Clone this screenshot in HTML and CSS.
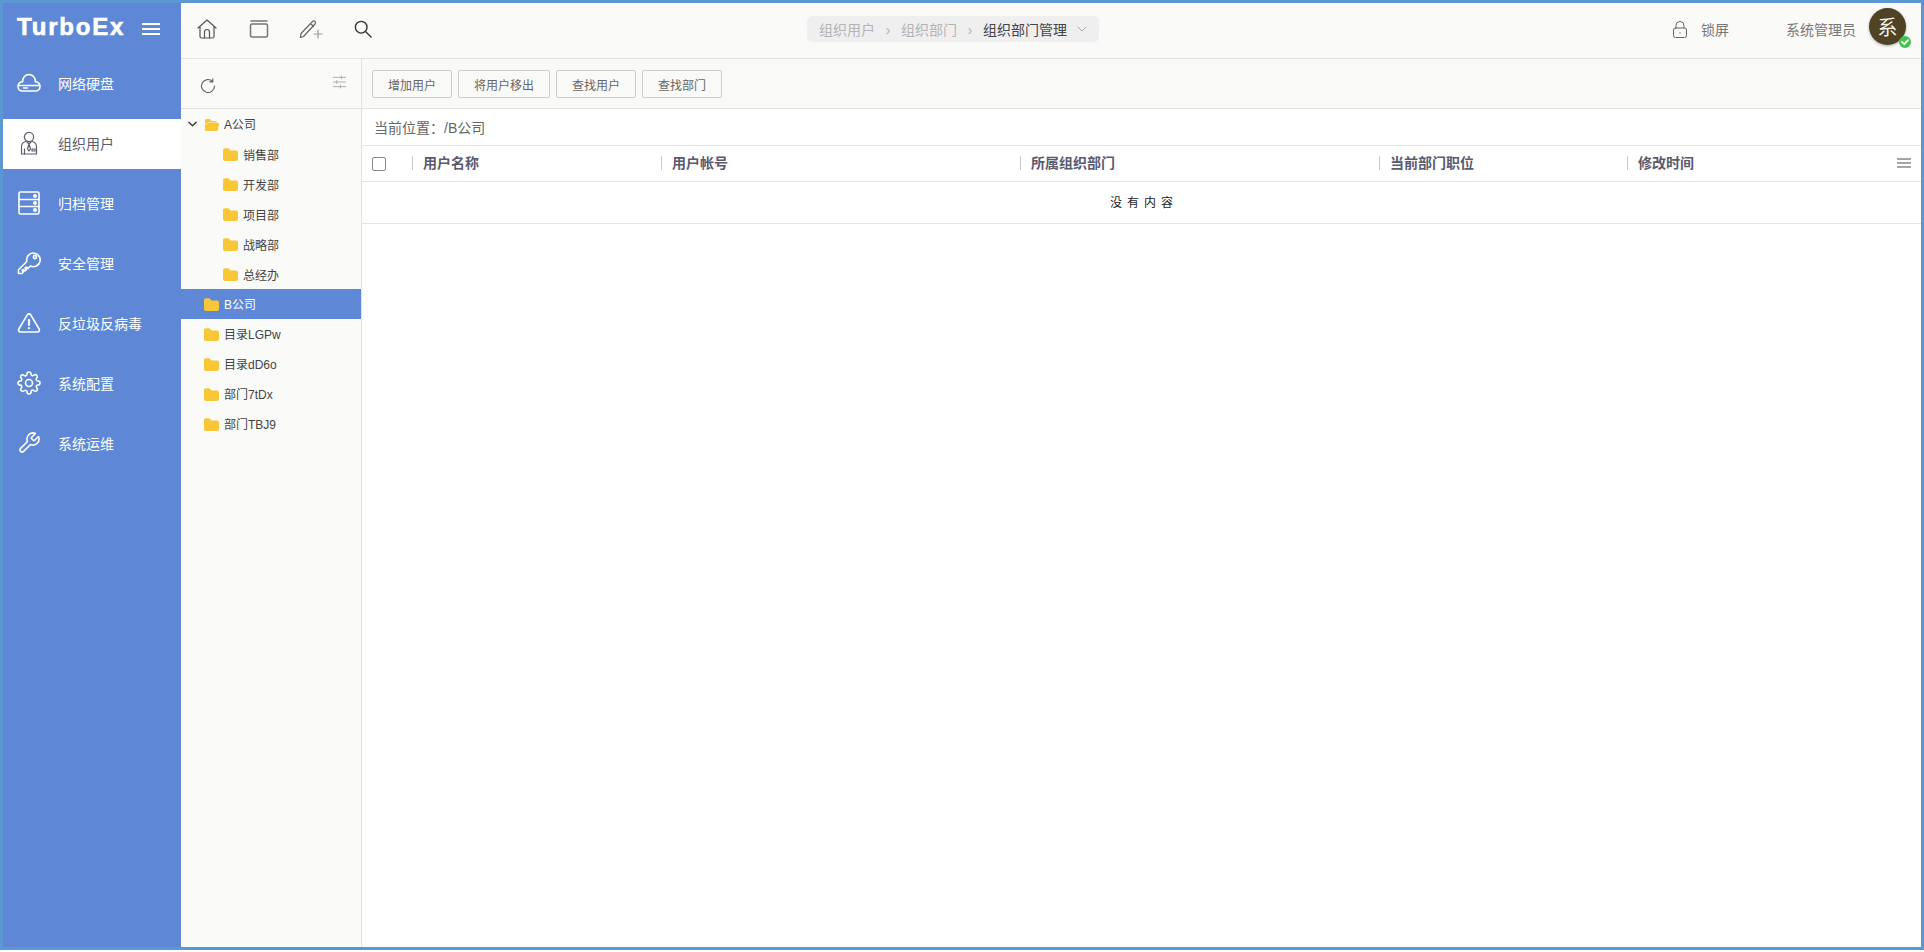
FILE: index.html
```html
<!DOCTYPE html>
<html lang="zh-CN">
<head>
  <meta charset="UTF-8">
  <meta name="viewport" content="width=device-width, initial-scale=1.0">
  <title>TurboEx</title>
  <link rel="stylesheet" href="styles.css">
</head>
<body>
  <div class="app">
    <aside class="sidebar">
      <div class="logo">
        <span class="logo-text">TurboEx</span>
        <svg class="burger" viewBox="0 0 18 12"><path d="M0 1h18M0 6h18M0 11h18"/></svg>
      </div>
      <nav class="nav">
        <a class="nav-item">
          <svg class="nav-icon" viewBox="0 0 24 24"><path d="M5.500 11C5.500 6.500 8.500 3.500 12 3.500s6.500 3 6.500 7.500"/><path d="M5.500 10.500C3 11 1 13 1 15.500 1 18 3 20 5.500 20h13c2.500 0 4.500-2 4.500-4.500 0-2.500-2-4.500-4.500-5"/><path d="M1.500 14.500h21M6.500 17h4"/></svg>
          网络硬盘
        </a>
        <a class="nav-item active">
          <svg class="nav-icon" viewBox="0 0 24 24"><circle cx="12" cy="6" r="4.600"/><path d="M8.500 10.500C5.500 11.500 4.500 13 4.500 16v7h15v-7c0-3-1-4.500-4-5.500"/><path d="M10 11l2 2 2-2M12 13l-1.500 5 1.500 2 1.500-2zM7.500 23v-5M15 18h3v2h-3z"/></svg>
          组织用户
        </a>
        <a class="nav-item">
          <svg class="nav-icon" viewBox="0 0 24 24"><rect x="2" y="1" width="20" height="22" rx="1.500"/><path d="M2 8.500h20M2 15.500h20"/><circle cx="18" cy="5" r="1.200"/><circle cx="18" cy="12" r="1.200"/><circle cx="18" cy="19" r="1.200"/></svg>
          归档管理
        </a>
        <a class="nav-item">
          <svg class="nav-icon" viewBox="0 0 24 24"><path d="M9.800 10.500L1.500 18.800V22a.5.5 0 0 0 .5.5H5L6.500 21 5 19.500l1.500-1L8 20l1.500-1.500L8 17l1.500-1L11 17.500l2.500-2.500A6.800 6.800 0 1 0 9.800 10.500z"/><circle cx="18" cy="6" r="1.600"/></svg>
          安全管理
        </a>
        <a class="nav-item">
          <svg class="nav-icon" viewBox="0 0 24 24"><path d="M10.290 3.860L1.820 18a2 2 0 0 0 1.710 3h16.940a2 2 0 0 0 1.710-3L13.710 3.860a2 2 0 0 0-3.420 0z"/><path class="mark" d="M12 9v5M12 17v.2"/></svg>
          反垃圾反病毒
        </a>
        <a class="nav-item">
          <svg class="nav-icon" viewBox="0 0 24 24"><circle cx="12" cy="12" r="3.500"/><path d="M19.400 15a1.650 1.650 0 0 0 .33 1.820l.06.06a2 2 0 0 1 0 2.830 2 2 0 0 1-2.830 0l-.06-.06a1.650 1.650 0 0 0-1.820-.33 1.650 1.650 0 0 0-1 1.510V21a2 2 0 0 1-2 2 2 2 0 0 1-2-2v-.09A1.650 1.650 0 0 0 9 19.400a1.650 1.650 0 0 0-1.820.33l-.06.06a2 2 0 0 1-2.830 0 2 2 0 0 1 0-2.830l.06-.06a1.650 1.650 0 0 0 .33-1.820 1.650 1.650 0 0 0-1.510-1H3a2 2 0 0 1-2-2 2 2 0 0 1 2-2h.09A1.650 1.650 0 0 0 4.600 9a1.650 1.650 0 0 0-.33-1.820l-.06-.06a2 2 0 0 1 0-2.830 2 2 0 0 1 2.830 0l.06.06a1.650 1.650 0 0 0 1.820.33H9a1.650 1.650 0 0 0 1-1.510V3a2 2 0 0 1 2-2 2 2 0 0 1 2 2v.09a1.650 1.650 0 0 0 1 1.510 1.650 1.650 0 0 0 1.820-.33l.06-.06a2 2 0 0 1 2.830 0 2 2 0 0 1 0 2.830l-.06.06a1.650 1.650 0 0 0-.33 1.820V9a1.650 1.650 0 0 0 1.510 1H21a2 2 0 0 1 2 2 2 2 0 0 1-2 2h-.09a1.650 1.650 0 0 0-1.510 1z"/></svg>
          系统配置
        </a>
        <a class="nav-item">
          <svg class="nav-icon" viewBox="0 0 24 24"><path d="M14.700 6.300a1 1 0 0 0 0 1.400l1.600 1.600a1 1 0 0 0 1.400 0l3.770-3.770a6 6 0 0 1-7.940 7.940l-6.910 6.910a2.120 2.120 0 0 1-3-3l6.910-6.910a6 6 0 0 1 7.940-7.940l-3.760 3.760z"/></svg>
          系统运维
        </a>
      </nav>
    </aside>

    <div class="content">
      <header class="header">
        <div class="tools">
          <svg class="tool tool-home" viewBox="0 0 20 20"><path d="M1 9l9-8 9 8M3 7.500V17.500a1.500 1.500 0 0 0 1.500 1.500h11a1.500 1.500 0 0 0 1.500-1.500V7.500"/><path d="M7.500 19v-6a2.500 2.500 0 0 1 5 0v6"/></svg>
          <svg class="tool tool-box" viewBox="0 0 20 20"><path d="M2 2h16"/><rect x="1.500" y="5" width="17" height="13" rx="1.500"/></svg>
          <svg class="tool tool-pen" viewBox="0 0 24 20"><path d="M2 14.500L13.500 2.500a1.800 1.800 0 0 1 2.500 0 1.800 1.800 0 0 1 0 2.500L4.500 17.500 1.500 18.500zM11.500 4.500l3 3"/><path class="soft" d="M19 11v8M15 15h8"/></svg>
          <svg class="tool tool-search" viewBox="0 0 20 20"><circle cx="8" cy="8" r="6.500"/><path d="M13 13l6 6"/></svg>
        </div>
        <div class="crumbs">
          <span>组织用户</span><i class="crumb-sep">›</i>
          <span>组织部门</span><i class="crumb-sep">›</i>
          <span class="current">组织部门管理</span>
          <svg class="crumb-arrow" viewBox="0 0 10 6"><path d="M1 1l4 4 4-4"/></svg>
        </div>
        <div class="user">
          <svg class="lock" viewBox="0 0 14 17"><path d="M3 7V4.500a4 4 0 0 1 8 0V7"/><rect x=".5" y="7" width="13" height="9.500" rx="2"/><path d="M7 11.500v.5"/></svg>
          <span class="lock-text">锁屏</span>
          <span class="user-name">系统管理员</span>
          <div class="avatar">系
            <span class="badge"><svg viewBox="0 0 12 12"><path d="M3 6l2.200 2.200L9 4.200"/></svg></span>
          </div>
        </div>
      </header>

      <div class="workspace">
        <section class="tree-panel">
          <div class="tree-tools">
            <svg class="refresh" viewBox="0 0 16 16"><path d="M14.500 8a6.500 6.500 0 1 1-2-4.700M12.800 .8v3h-3"/></svg>
            <svg class="sliders" viewBox="0 0 14 14"><path d="M0 2h14M0 7h14M0 12h14"/><path class="knob" d="M9 .5v3M4 5.500v3M8 10.500v3"/></svg>
          </div>
          <ul class="tree">
            <li class="tree-row">
              <svg class="caret" viewBox="0 0 10 6"><path d="M1 1l4 4 4-4"/></svg>
              <svg class="folder" viewBox="0 0 15 13"><path d="M1 2.500C1 1.700 1.700 1 2.500 1H6l1.500 2h4c.8 0 1.500.7 1.500 1.500H4L1 6z"/><path d="M3.500 5H14c.7 0 1 .5 1 1l-1 5.500c-.1.8-.7 1.500-1.500 1.500h-10C1.500 13 1 12.300 1 11.500V7z"/></svg>
              A公司
            </li>
            <li class="tree-row child"><svg class="folder" viewBox="0 0 15 13"><use href="#closed"/></svg>销售部</li>
            <li class="tree-row child"><svg class="folder" viewBox="0 0 15 13"><use href="#closed"/></svg>开发部</li>
            <li class="tree-row child"><svg class="folder" viewBox="0 0 15 13"><use href="#closed"/></svg>项目部</li>
            <li class="tree-row child"><svg class="folder" viewBox="0 0 15 13"><use href="#closed"/></svg>战略部</li>
            <li class="tree-row child"><svg class="folder" viewBox="0 0 15 13"><use href="#closed"/></svg>总经办</li>
            <li class="tree-row root selected"><svg class="folder" viewBox="0 0 15 13"><use href="#closed"/></svg>B公司</li>
            <li class="tree-row root"><svg class="folder" viewBox="0 0 15 13"><use href="#closed"/></svg>目录LGPw</li>
            <li class="tree-row root"><svg class="folder" viewBox="0 0 15 13"><use href="#closed"/></svg>目录dD6o</li>
            <li class="tree-row root"><svg class="folder" viewBox="0 0 15 13"><use href="#closed"/></svg>部门7tDx</li>
            <li class="tree-row root"><svg class="folder" viewBox="0 0 15 13"><use href="#closed"/></svg>部门TBJ9</li>
          </ul>
          <svg class="defs" width="0" height="0"><defs><path id="closed" d="M0 2C0 1 .8.300 1.800.300H5.500L7.500 2.500h5.500C14.100 2.500 15 3.400 15 4.500V11c0 1.100-.9 2-2 2H2c-1.100 0-2-.9-2-2z"/></defs></svg>
        </section>

        <main class="main">
          <div class="toolbar">
            <button class="btn">增加用户</button>
            <button class="btn">将用户移出</button>
            <button class="btn">查找用户</button>
            <button class="btn">查找部门</button>
          </div>
          <div class="location">当前位置：/B公司</div>
          <div class="thead">
            <div class="th-check"><span class="checkbox"></span></div>
            <div class="th"><span>用户名称</span></div>
            <div class="th"><span>用户帐号</span></div>
            <div class="th"><span>所属组织部门</span></div>
            <div class="th"><span>当前部门职位</span></div>
            <div class="th th-last">
              <span>修改时间</span>
              <svg class="col-menu" viewBox="0 0 14 10"><path d="M0 1h14M0 5h14M0 9h14"/></svg>
            </div>
          </div>
          <div class="empty">没有内容</div>
        </main>
      </div>
    </div>
  </div>
</body>
</html>
```

FILE: styles.css
```css
* {
  box-sizing: border-box;
}
html, body {
  margin: 0;
  padding: 0;
  height: 100%;
  overflow: hidden;
}
body {
  font-family: "Liberation Sans", "Noto Sans CJK SC", sans-serif;
  font-size: 14px;
  color: #444;
  background-color: #fff;
}
svg {
  display: block;
  flex: none;
  fill: none;
  stroke: currentColor;
  stroke-linecap: round;
  stroke-linejoin: round;
}
ul {
  list-style: none;
  margin: 0;
  padding: 0;
}

.app {
  display: flex;
  height: 950px;
  border: 3px solid #5b98d3;
}

/* sidebar */
.sidebar {
  width: 178px;
  flex: none;
  background-color: #5e88d5;
  color: #fff;
}
.logo {
  display: flex;
  align-items: center;
  height: 56px;
  padding: 0 0 5px 14px;
}
.logo-text {
  margin-bottom: 4px;
  font-size: 24px;
  font-weight: bold;
  letter-spacing: 1.8px;
  -webkit-text-stroke: 0.6px #fff;
}
.burger {
  width: 18px;
  height: 12px;
  margin-left: 17px;
  stroke-width: 2;
  stroke-linecap: butt;
}
.nav-item {
  display: flex;
  align-items: center;
  height: 50px;
  margin-bottom: 10px;
  padding: 0 0 2px 14px;
  gap: 17px;
}
.nav-item.active {
  background-color: #fff;
  color: #5c5c6e;
}
.nav-icon {
  width: 24px;
  height: 24px;
  stroke-width: 1.6;
}
.nav-item.active .nav-icon {
  stroke-width: 1.2;
}
.nav-icon .mark {
  stroke-width: 2.2;
}

/* top bar */
.content {
  flex: 1;
  display: flex;
  flex-direction: column;
  min-width: 0;
}
.header {
  display: flex;
  align-items: center;
  height: 56px;
  flex: none;
  padding-bottom: 3px;
  background-color: #fafaf8;
  border-bottom: 1px solid #e4e4e2;
}
.tools {
  display: flex;
  align-items: center;
  padding-left: 16px;
  color: #555;
}
.tool {
  stroke-width: 1.2;
}
.tool-home {
  width: 20px;
  height: 20px;
}
.tool-box {
  width: 20px;
  height: 20px;
  margin-left: 32px;
  color: #777;
  stroke-width: 1.5;
}
.tool-pen {
  width: 24px;
  height: 20px;
  margin-left: 30px;
  color: #666;
}
.tool-pen .soft {
  color: #999;
}
.tool-search {
  width: 18px;
  height: 18px;
  margin-left: 31px;
  color: #333;
  stroke-width: 1.5;
}
.crumbs {
  display: flex;
  align-items: center;
  height: 26px;
  margin-left: 435px;
  padding: 0 12px;
  background-color: #efefef;
  border-radius: 5px;
  color: #b4b4b4;
}
.crumb-sep {
  width: 26px;
  text-align: center;
  font-style: normal;
  font-size: 15px;
}
.crumbs .current {
  color: #444;
}
.crumb-arrow {
  width: 10px;
  height: 6px;
  margin-left: 10px;
  color: #aaa;
}
.user {
  display: flex;
  align-items: center;
  margin-left: auto;
  padding-right: 15px;
  color: #777;
}
.lock {
  width: 14px;
  height: 17px;
  color: #666;
}
.lock-text {
  margin-left: 14px;
}
.user-name {
  margin-left: 57px;
}
.avatar {
  position: relative;
  display: flex;
  align-items: center;
  justify-content: center;
  width: 37px;
  height: 37px;
  margin: 0 0 5px 13px;
  border-radius: 50%;
  background-color: #4f4225;
  color: #f5f2e8;
  font-size: 20px;
  box-shadow: 0 1px 3px rgba(0, 0, 0, .3);
}
.badge {
  position: absolute;
  right: -5px;
  bottom: -3px;
  width: 12px;
  height: 12px;
  border-radius: 50%;
  background-color: #3fc44c;
  color: #fff;
}
.badge svg {
  width: 12px;
  height: 12px;
  stroke-width: 1.8;
}

/* tree */
.workspace {
  flex: 1;
  display: flex;
  min-height: 0;
}
.tree-panel {
  width: 181px;
  flex: none;
  background-color: #fafaf8;
  border-right: 1px solid #e2e2e2;
}
.tree-tools {
  display: flex;
  align-items: center;
  justify-content: space-between;
  height: 50px;
  padding: 0 15px 0 19px;
  border-bottom: 1px solid #e4e4e2;
}
.refresh {
  width: 16px;
  height: 16px;
  margin-top: 4px;
  color: #666;
  stroke-width: 1.2;
}
.sliders {
  width: 13px;
  height: 14px;
  margin-top: -3px;
  color: #aaa;
}
.tree-row {
  display: flex;
  align-items: center;
  height: 30px;
  padding: 0 0 1px 7px;
  font-size: 12px;
  color: #444;
}
.tree-row.root {
  padding-left: 23px;
}
.tree-row.child {
  padding: 0 0 0 42px;
}
.tree-row.selected {
  background-color: #5e88d5;
  color: #fff;
}
.caret {
  width: 9px;
  height: 6px;
  margin-right: 7px;
  color: #333;
  stroke-width: 1.4;
}
.folder {
  width: 15px;
  height: 13px;
  margin: 1px 5px 0 0;
  fill: #f8c636;
  stroke: none;
}
.defs {
  position: absolute;
}

/* main table */
.main {
  flex: 1;
  min-width: 0;
  background-color: #fff;
}
.toolbar {
  display: flex;
  align-items: center;
  gap: 6px;
  height: 50px;
  padding: 1px 0 0 10px;
  background-color: #f9f9f7;
  border-bottom: 1px solid #e4e4e2;
}
.btn {
  height: 28px;
  padding: 0 15px;
  font-family: inherit;
  font-size: 12px;
  color: #666;
  background-color: #f9f9f7;
  border: 1px solid #ccc;
  border-radius: 2px;
}
.location {
  display: flex;
  align-items: center;
  height: 37px;
  padding-left: 12px;
  font-size: 14px;
  color: #666;
  border-bottom: 1px solid #e4e4e4;
}
.thead {
  display: grid;
  grid-template-columns: 50px 249px 359px 359px 248px 1fr;
  align-items: center;
  height: 36px;
  border-bottom: 1px solid #e4e4e4;
}
.th-check {
  padding-left: 10px;
}
.checkbox {
  display: block;
  width: 14px;
  height: 14px;
  border: 1px solid #888;
  border-radius: 2px;
}
.th {
  padding-bottom: 1px;
  font-weight: bold;
  color: #5a5a70;
}
.th span {
  display: block;
  line-height: 14px;
  padding-left: 10px;
  border-left: 1px solid #ccc;
}
.th-last {
  display: flex;
  align-items: center;
  justify-content: space-between;
  padding-right: 10px;
}
.col-menu {
  width: 14px;
  height: 10px;
  color: #888;
  stroke-width: 1.4;
}
.empty {
  height: 42px;
  padding-left: 5px;
  line-height: 43px;
  text-align: center;
  font-size: 12px;
  letter-spacing: 5px;
  color: #222;
  border-bottom: 1px solid #e4e4e4;
}
```
